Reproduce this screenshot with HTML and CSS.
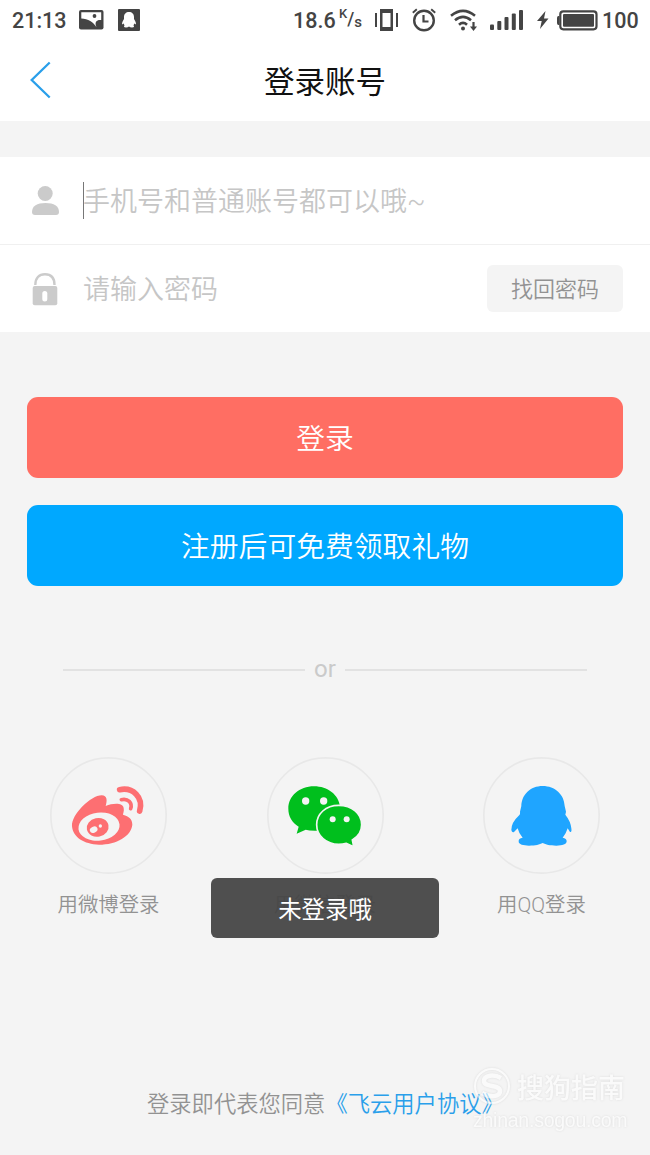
FILE: index.html
```html
<!DOCTYPE html>
<html lang="zh-CN">
<head>
  <meta charset="utf-8">
  <title>登录账号</title>
  <link rel="stylesheet" href="styles.css">
</head>
<body>
  <div class="status-bar">
    <span class="time">21:13</span>
    <svg class="icon-picture" width="25" height="20" viewBox="0 0 25 20">
      <rect width="24.5" height="19.5" rx="2" fill="#444"/>
      <path d="M2.300 2.300h19.900V10C18 9.500 15 11.500 17.500 17.300 14.500 12 9 8.500 2.300 8.500z" fill="#fff"/>
      <circle cx="15.500" cy="6" r="1.900" fill="#444"/>
    </svg>
    <svg class="icon-notice" width="22" height="22" viewBox="0 0 22 22">
      <rect width="22" height="22" rx="1" fill="#444"/>
      <path d="M11 3c-3 0-5 2-5 5v2c-1 1.500-2 3-2 5.500l1.700-1 .8 2c-1 1-.5 2 1.500 2 1.300 0 2.300-.4 3-1 .7.600 1.700 1 3 1 2 0 2.500-1 1.500-2l.8-2 1.700 1c0-2.500-1-4-2-5.500V8c0-3-2-5-5-5z" fill="#fff"/>
    </svg>
    <span class="speed">18.6</span>
    <span class="unit"><span class="unit-k">K</span><span class="unit-slash">/</span><span class="unit-s">s</span></span>
    <svg class="icon-vibrate" width="23" height="22" viewBox="0 0 23 22" fill="#444">
      <path d="M0 4h2v14H0zM21 4h2v14h-2z"/>
      <path fill-rule="evenodd" d="M5 0h13v22H5zM7.500 4v14h8V4z"/>
    </svg>
    <svg class="icon-alarm" width="24" height="24" viewBox="0 0 24 24" fill="none" stroke="#444">
      <circle cx="12" cy="12.500" r="9.800" stroke-width="2.400"/>
      <path d="M11.500 7v6.500h5" stroke-width="2.200"/>
      <path d="M.8 4.800L4.800 1.300M19.200 1.300l4 3.500" stroke-width="1.900"/>
    </svg>
    <svg class="icon-wifi" width="29" height="23" viewBox="0 0 29 23" fill="none" stroke="#444" stroke-width="2.600">
      <path d="M1 6.700Q13 -3 25 6.700"/>
      <path d="M5 11.300Q13 4.500 21 11.300"/>
      <path d="M9 15.700Q13 12 17 15.700"/>
      <circle cx="13" cy="19.500" r="2" fill="#444" stroke="none"/>
      <path d="M23.500 13v6" stroke-width="2.200"/>
      <path d="M20 17.500h7l-3.500 4.500z" fill="#444" stroke="none"/>
    </svg>
    <svg class="icon-signal" width="33" height="21" viewBox="0 0 33 21" fill="#444">
      <rect x="0" y="14.500" width="4" height="5.500" rx="1"/>
      <rect x="7.300" y="11" width="4" height="9" rx="1"/>
      <rect x="14.500" y="7" width="4" height="13" rx="1"/>
      <rect x="21.800" y="3.500" width="4" height="16.500" rx="1"/>
      <rect x="29" y="0" width="4" height="20" rx="1"/>
    </svg>
    <svg class="icon-bolt" width="12" height="18" viewBox="0 0 12 18">
      <path d="M8.500 0L0 10h4.700L3 18l8.500-10.500H7z" fill="#444"/>
    </svg>
    <svg class="icon-battery" width="41" height="21" viewBox="0 0 41 21">
      <rect x="3.300" y="1.300" width="36.200" height="18" rx="3" fill="none" stroke="#444" stroke-width="2.200"/>
      <path d="M2.500 6H1.500Q0 6 0 8v5q0 2 1.500 2h1z" fill="#444"/>
      <rect x="6" y="4" width="31" height="12.700" rx="1" fill="#444"/>
    </svg>
    <span class="percent">100</span>
  </div>

  <div class="title-bar">
    <svg class="back" width="22" height="38" viewBox="0 0 22 38">
      <path d="M19.700 1.500L1.700 19l18 17.500" fill="none" stroke="#2a9fea" stroke-width="2.300"/>
    </svg>
    <h1>登录账号</h1>
  </div>

  <div class="form">
    <div class="field">
      <svg class="field-icon" width="28" height="30" viewBox="0 0 28 30" fill="#cbcbcb">
        <circle cx="13.200" cy="7.500" r="7.500"/>
        <path d="M0 26c0-6 5-9 13.500-9S27 20 27 26q0 3-3 3H3q-3 0-3-3z"/>
      </svg>
      <span class="caret"></span>
      <span class="placeholder">手机号和普通账号都可以哦~</span>
    </div>
    <div class="field">
      <svg class="field-icon" width="28" height="33" viewBox="0 0 28 33">
        <path d="M3.300 12C3.300 5 7 1.300 13 1.300S22.500 5 22.500 12" fill="none" stroke="#cbcbcb" stroke-width="2.400"/>
        <rect x=".7" y="13" width="24.600" height="19.300" rx="2" fill="#cbcbcb"/>
        <rect x="10.300" y="18" width="5" height="10.500" rx="2.500" fill="#fff"/>
      </svg>
      <span class="placeholder">请输入密码</span>
      <button class="find-button">找回密码</button>
    </div>
  </div>

  <div class="actions">
    <button class="login">登录</button>
    <button class="register">注册后可免费领取礼物</button>
  </div>

  <div class="divider"><span>or</span></div>

  <div class="social">
    <div class="social-item">
      <svg class="social-icon" viewBox="0 0 351 351">
        <circle cx="175.500" cy="175.500" r="173" fill="none" stroke="#e8e8e8" stroke-width="5"/>
        <path d="M66 208C64 172 123 115 155 115C172 115 172 131 167 147C188 139 218 136 221 153C223 162 219 170 219 173C237 178 247 186 247 203C244 237 200 263 147 263C102 262 69 241 66 208Z" fill="#fd6f72"/>
        <ellipse cx="147" cy="209" rx="62" ry="42" fill="#f4f4f4" transform="rotate(-7 147 209)"/>
        <ellipse cx="143" cy="211" rx="33" ry="28" fill="#fd6f72" transform="rotate(-12 143 211)"/>
        <ellipse cx="131" cy="218" rx="12" ry="9" fill="#f4f4f4" transform="rotate(-25 131 218)"/>
        <circle cx="151" cy="207" r="5" fill="#f4f4f4"/>
        <g fill="none" stroke="#fd6f72" stroke-linecap="round">
          <path d="M209 98C249 90 281 121 269 162" stroke-width="17"/>
          <path d="M214 128C234 123 248 138 242 155" stroke-width="11"/>
        </g>
      </svg>
      <span class="social-label">用微博登录</span>
    </div>
    <div class="social-item">
      <svg class="social-icon" viewBox="2 -2 351 351">
        <circle cx="177.500" cy="173.500" r="173" fill="none" stroke="#e8e8e8" stroke-width="5"/>
        <path d="M143 86C99 86 66 115 66 153C66 176 77 194 97 207L91 228L118 216Q130 220 155 219Q188 217 205 192Q222 172 221 147C217 111 184 86 143 86Z" fill="#00bf1d"/>
        <path d="M217 143C178 143 151 169 151 201C151 234 180 260 217 260Q229 260 240 257L262 267L258 247Q286 230 286 201C286 168 257 143 217 143Z" fill="#00bf1d" stroke="#f4f4f4" stroke-width="5"/>
        <g fill="#f4f4f4">
          <circle cx="118" cy="130" r="11"/>
          <circle cx="172" cy="130" r="11"/>
          <circle cx="199" cy="185" r="9"/>
          <circle cx="241" cy="185" r="9"/>
        </g>
      </svg>
      <span class="social-label">用微信登录</span>
    </div>
    <div class="social-item">
      <svg class="social-icon" viewBox="0 0 351 351">
        <circle cx="175.500" cy="175.500" r="173" fill="none" stroke="#e8e8e8" stroke-width="5"/>
        <path d="M179 87C142 87 116 113 115 147L111 164Q112 169 110 173Q84 197 85 219Q87 228 93 225L104 214Q108 231 119 242Q106 244 107 253C106 263 122 266 138 266C158 266 169 263 179 258C189 263 200 266 220 266C238 266 251 262 251 253Q251 244 239 242Q249 231 254 214L261 225Q267 227 265 214Q263 193 247 173L249 164L245 147C244 113 216 87 179 87Z" fill="#1fa5ff"/>
      </svg>
      <span class="social-label">用QQ登录</span>
    </div>
    <div class="toast">未登录哦</div>
  </div>

  <div class="agreement">登录即代表您同意<a class="agreement-link">《飞云用户协议》</a></div>

  <div class="watermark">
    <div class="watermark-brand">
      <svg width="38" height="38" viewBox="0 0 38 38" fill="none" stroke="#fff">
        <circle cx="19" cy="19" r="17" stroke-width="2"/>
        <path d="M28 11C21 7 11 8 11 14C11 21 27 17 27 24C27 30 17 31 9 26" stroke-width="4.500"/>
      </svg>
      <span>搜狗指南</span>
    </div>
    <div class="watermark-url">zhinan.sogou.com</div>
  </div>
</body>
</html>
```
FILE: styles.css
```css
* {
  box-sizing: border-box;
}
body {
  margin: 0;
  width: 650px;
  height: 1155px;
  overflow: hidden;
  position: relative;
  background-color: #f4f4f4;
  font-family: Roboto, "Noto Sans CJK SC", sans-serif;
  font-weight: 350;
}
button {
  font-family: inherit;
  font-weight: inherit;
  border: none;
  padding: 0;
  cursor: pointer;
}
svg {
  display: block;
  flex: none;
}

/* status bar */
.status-bar {
  display: flex;
  align-items: center;
  height: 40px;
  padding-left: 12px;
  background-color: #fff;
  color: #444;
  font-size: 21.5px;
  font-weight: 500;
  white-space: nowrap;
}
.time {
  width: 67px;
}
.icon-notice {
  margin-left: 14px;
}
.speed {
  width: 46px;
  margin-left: 153px;
}
.unit {
  display: flex;
  width: 36px;
  line-height: 20px;
}
.unit-k {
  font-size: 13px;
  margin-top: -5px;
}
.unit-slash {
  font-size: 18px;
}
.unit-s {
  font-size: 15px;
  margin-top: 3px;
}
.icon-alarm {
  margin-left: 14px;
}
.icon-wifi {
  margin-left: 14px;
}
.icon-signal {
  margin-left: 11px;
}
.icon-bolt {
  margin-left: 14px;
}
.icon-battery {
  margin-left: 8px;
}
.percent {
  margin-left: 4px;
}

/* title */
.title-bar {
  display: grid;
  grid-template-columns: 30px 1fr 30px;
  align-items: center;
  height: 81px;
  padding-bottom: 2px;
  background-color: #fff;
}
.back {
  grid-column: 2;
  grid-row: 1;
}
.title-bar h1 {
  grid-column: 1 / 4;
  grid-row: 1;
  margin: 0;
  text-align: center;
  font-size: 30.5px;
  font-weight: 400;
  color: #111;
}

/* form */
.form {
  margin-top: 36px;
  background-color: #fff;
}
.field {
  display: flex;
  align-items: center;
  height: 88px;
  padding: 0 27px 0 32px;
}
.field:first-child {
  border-bottom: 1px solid #f0f0f0;
}
.field:last-child {
  height: 87px;
}
.field-icon {
  margin-top: 1px;
  margin-right: 23px;
}
.caret {
  width: 1px;
  height: 37px;
  margin-right: -1px;
  background-color: #777;
}
.placeholder {
  padding-bottom: 2px;
  font-size: 27px;
  color: #c6c6c6;
}
.find-button {
  width: 136px;
  height: 47px;
  margin-left: auto;
  padding-bottom: 3px;
  border-radius: 6px;
  background-color: #f4f4f4;
  font-size: 22px;
  color: #929292;
}

/* buttons */
.actions {
  display: flex;
  flex-direction: column;
  gap: 27px;
  padding: 65px 27px 0;
}
.actions button {
  height: 81px;
  padding-bottom: 2px;
  border-radius: 11px;
  font-size: 28.8px;
  color: #fff;
}
.actions .login {
  background-color: #ff6e63;
}
.actions .register {
  background-color: #00a8ff;
}

.divider {
  display: flex;
  align-items: center;
  gap: 9px;
  height: 30px;
  margin: 69px 63px 0;
  font-size: 24px;
  font-weight: 400;
  color: #cacaca;
}
.divider span {
  padding-bottom: 2px;
}
.divider::before,
.divider::after {
  content: "";
  flex: 1;
  height: 2px;
  background-color: #e2e2e2;
}

/* third party login */
.social {
  position: relative;
  display: flex;
  justify-content: space-between;
  margin-top: 72px;
  padding: 0 50px;
}
.social-item {
  display: flex;
  flex-direction: column;
  align-items: center;
  width: 117px;
}
.social-icon {
  width: 117px;
  height: 117px;
}
.social-label {
  margin-top: 16px;
  line-height: 30px;
  font-size: 20.4px;
  color: #929292;
}
.toast {
  position: absolute;
  top: 121px;
  left: 211px;
  width: 228px;
  height: 60px;
  padding-top: 2px;
  line-height: 60px;
  border-radius: 6px;
  background-color: rgba(68, 68, 68, 0.94);
  text-align: center;
  font-size: 23.4px;
  font-weight: 400;
  color: #fff;
}

.agreement {
  margin: 169px 0 0 147px;
  line-height: 30px;
  font-size: 22.3px;
  color: #929292;
}
.agreement-link {
  color: #2a9fea;
}

.watermark {
  position: absolute;
  top: 1067px;
  left: 473px;
  color: #fff;
  opacity: 0.6;
  filter: drop-shadow(0 0 1px #ccc);
}
.watermark-brand {
  display: flex;
  align-items: center;
  gap: 6px;
  height: 38px;
  font-size: 27px;
  font-weight: 500;
}
.watermark-url {
  margin-top: 3px;
  font: 19.500px/24px "Liberation Sans", sans-serif;
  letter-spacing: -0.250px;
}
```
